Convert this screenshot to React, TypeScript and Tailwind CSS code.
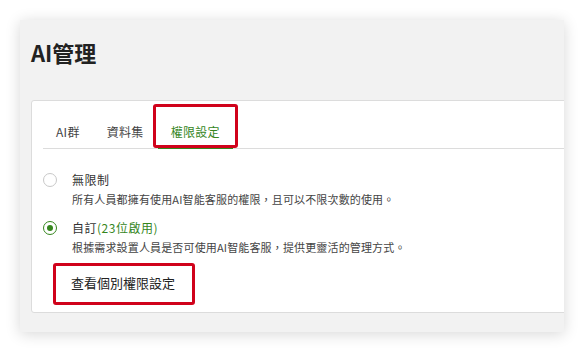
import React from "react";

const font = { fontFamily: '"Noto Sans CJK TC", "Noto Sans", sans-serif' };

export default function App() {
  return (
    <div className="w-[584px] h-[352px] bg-white overflow-hidden" style={font}>
      <div className="ml-[20px] mt-[20px] w-[544px] h-[312px] bg-[#f2f2f2] shadow-[0_2px_14px_rgba(0,0,0,0.16)] overflow-hidden pl-[11px] pt-[18px]">
        <h1 className="text-[22px] leading-[28px] font-bold text-[#222]">AI管理</h1>
        <div className="mt-[34px] w-[600px] h-[213px] bg-white border border-[#dcdcdc] rounded-[3px]">
          <div className="ml-[11px] flex gap-[1px] border-b border-[#dcdcdc] h-[48px]">
            <div className="px-[13px] pt-[22px] text-[12px] leading-[18px] tracking-[0.3px] text-[#444]">AI群</div>
            <div className="px-[13px] pt-[22px] text-[12px] leading-[18px] tracking-[0.3px] text-[#444]">資料集</div>
            <div className="relative px-[13px] pt-[22px] text-[12px] leading-[18px] tracking-[0.3px] text-[#35861d] border-b-2 border-[#35861d] -mb-px">
              權限設定
              <div className="absolute -left-[5px] top-[3px] w-[85px] h-[44px] border-[3px] border-[#d0021b] rounded-[3px]" />
            </div>
          </div>
          <div className="pl-[11px] pt-[22px]">
            <div className="flex gap-[15px]">
              <div className="mt-[2px] w-[14px] h-[14px] rounded-full border border-[#c8c8c8] bg-white shrink-0" />
              <div>
                <div className="text-[12px] leading-[18px] tracking-[0.5px] text-[#333]">無限制</div>
                <div className="mt-[2px] text-[11px] leading-[16px] tracking-[0.15px] text-[#444]">所有人員都擁有使用AI智能客服的權限，且可以不限次數的使用。</div>
              </div>
            </div>
            <div className="flex gap-[15px] mt-[12px]">
              <div className="mt-[2px] w-[14px] h-[14px] rounded-full border-[1.5px] border-[#35861d] bg-white shrink-0 flex items-center justify-center">
                <div className="w-[6px] h-[6px] rounded-full bg-[#35861d]" />
              </div>
              <div>
                <div className="text-[12px] leading-[18px] tracking-[0.5px] text-[#333]">
                  自訂<span className="text-[#35861d]">(23位啟用)</span>
                </div>
                <div className="mt-[2px] text-[11px] leading-[16px] tracking-[0.15px] text-[#444]">根據需求設置人員是否可使用AI智能客服，提供更靈活的管理方式。</div>
              </div>
            </div>
            <div className="mt-[14px] ml-[28px]">
              <div className="relative inline-block text-[13px] leading-[20px] text-[#222]">
                查看個別權限設定
                <div className="absolute -left-[18px] -top-[10px] w-[142px] h-[42px] border-[3px] border-[#d0021b] rounded-[3px]" />
              </div>
            </div>
          </div>
        </div>
      </div>
    </div>
  );
}
